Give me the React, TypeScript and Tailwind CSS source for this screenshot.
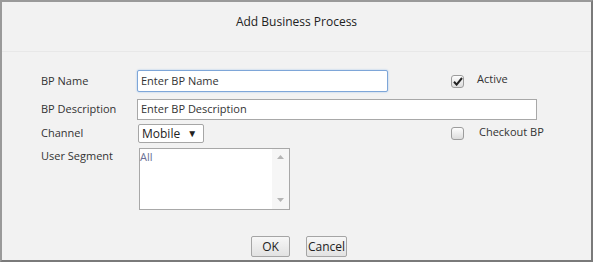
import React from "react";

function CheckBox({ checked }: { checked?: boolean }) {
  return (
    <div className="w-[13px] h-[13px] rounded-[3px] border border-[#9c9c9c] bg-gradient-to-b from-[#fdfdfd] to-[#dcdcdc] flex items-center justify-center shrink-0">
      {checked && (
        <svg width="10" height="9" viewBox="0 0 10 9">
          <path d="M1 4.8 L3.6 7.6 L9 1" fill="none" stroke="#222" strokeWidth="2" />
        </svg>
      )}
    </div>
  );
}

export default function App() {
  return (
    <div
      className="w-[593px] h-[262px] border-2 border-[#9a9a9a] border-r-[#7a7a7a] border-b-[#7a7a7a] bg-[#f2f2f2] flex flex-col text-[11px] text-[#333]"
      style={{ fontFamily: '"Open Sans", "Noto Sans", sans-serif' }}
    >
      <div className="h-[50px] pt-[11px] flex justify-center border-b border-[#e8e8e8] text-[12px] leading-[17px] text-[#222]">
        Add Business Process
      </div>
      <div className="flex flex-col pl-[39px] pt-[18px]">
        <div className="flex items-center h-[22px]">
          <div className="w-[96px]">BP Name</div>
          <div className="w-[251px] h-[22px] border border-[#7ea6d8] rounded-[2px] bg-white flex items-center px-[3px] shadow-[0_0_2px_#9cc0ec]">
            Enter BP Name
          </div>
          <div className="ml-[63px] flex items-center">
            <CheckBox checked />
            <span className="ml-[13px] -mt-[3px]">Active</span>
          </div>
        </div>
        <div className="flex items-center h-[21px] mt-[7px]">
          <div className="w-[96px]">BP Description</div>
          <div className="w-[400px] h-[21px] border border-[#a8a8a8] bg-white flex items-center px-[3px]">
            Enter BP Description
          </div>
        </div>
        <div className="flex items-center h-[19px] mt-[4px]">
          <div className="w-[97px]">Channel</div>
          <div className="w-[66px] h-[19px] border border-[#a6a6a6] rounded-[2px] bg-white flex items-center pl-[3px] text-[#222] text-[12px]">
            <span>Mobile</span>
            <span className="ml-[7px] text-[10px]">▼</span>
          </div>
          <div className="ml-[247px] flex items-center">
            <CheckBox />
            <span className="ml-[15px] -mt-[3px]">Checkout BP</span>
          </div>
        </div>
        <div className="flex items-start mt-[5px]">
          <div className="w-[98px] leading-[16px]">User Segment</div>
          <div className="w-[151px] h-[62px] border border-[#a8a8a8] bg-white flex">
            <div className="flex-1 text-[#6a6f95] leading-[15px]">All</div>
            <div className="w-[17px] bg-[#f6f6f6] flex flex-col items-center justify-between pt-[6px] pb-[7px]">
              <svg width="7" height="4" viewBox="0 0 7 4"><path d="M0 4 L3.5 0 L7 4Z" fill="#b5b5b5" /></svg>
              <svg width="7" height="4" viewBox="0 0 7 4"><path d="M0 0 L3.5 4 L7 0Z" fill="#b5b5b5" /></svg>
            </div>
          </div>
        </div>
      </div>
      <div className="flex justify-center mt-[26px] gap-[16px]">
        <button className="w-[39px] h-[21px] border border-[#a5a5a5] rounded-[2px] bg-gradient-to-b from-[#f7f7f7] to-[#e2e2e2] text-[12px] text-[#222] ml-[5px]">
          OK
        </button>
        <button className="w-[41px] h-[21px] border border-[#a5a5a5] rounded-[2px] bg-gradient-to-b from-[#f7f7f7] to-[#e2e2e2] text-[12px] text-[#222]">
          Cancel
        </button>
      </div>
    </div>
  );
}
